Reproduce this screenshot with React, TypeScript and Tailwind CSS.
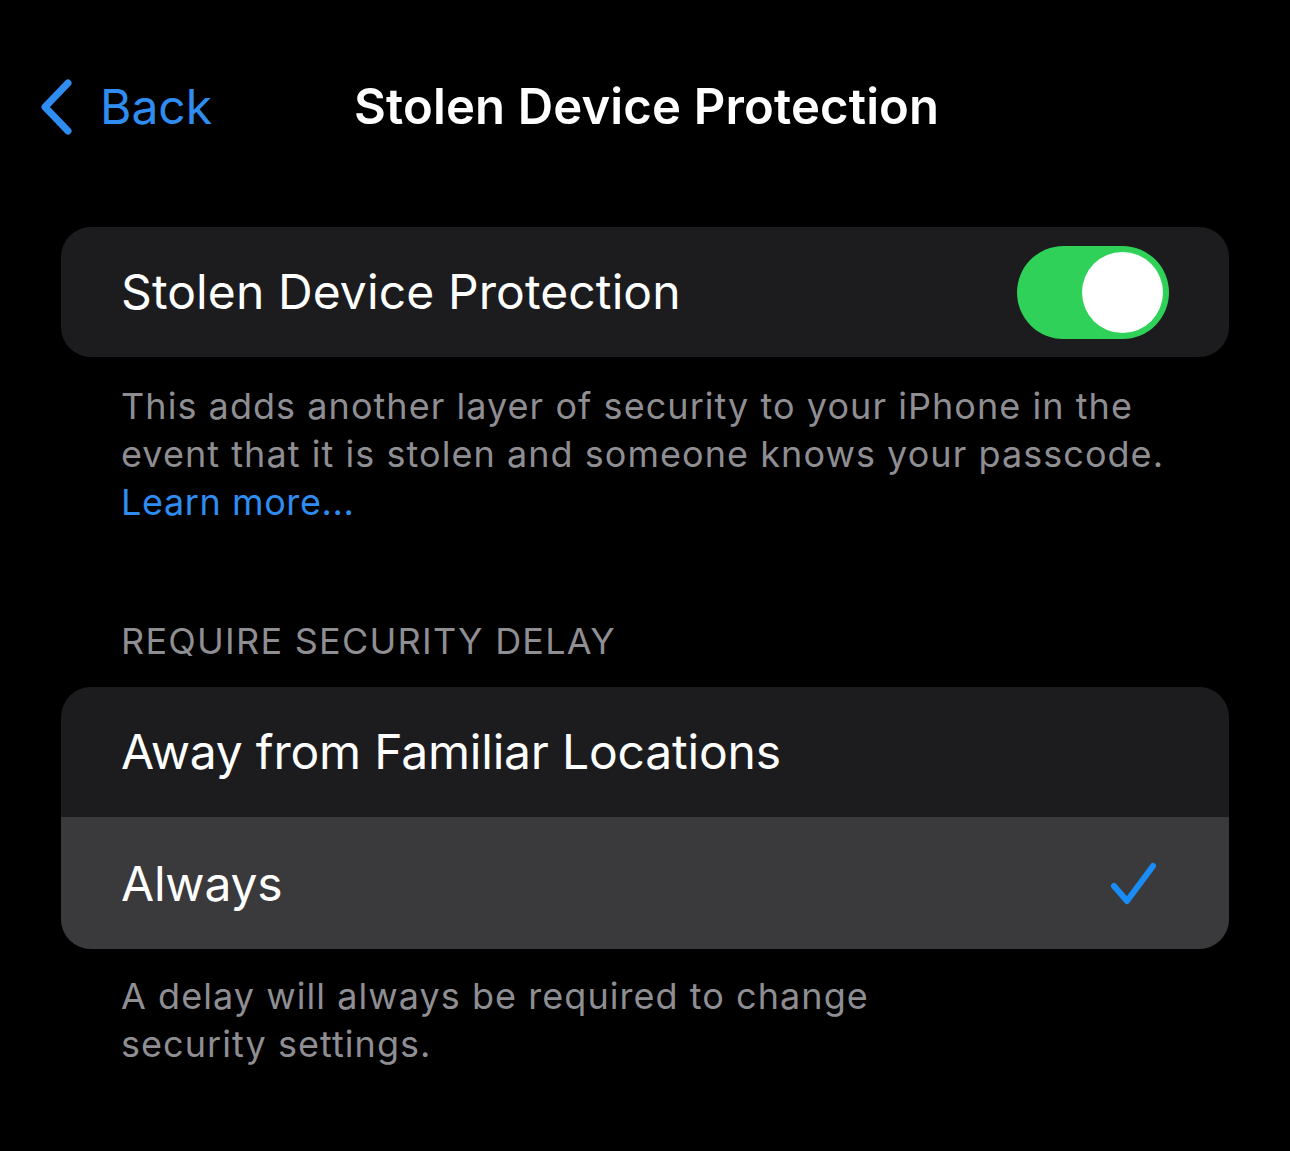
import React from "react";

export default function App() {
  return (
    <div
      className="w-[1290px] h-[1151px] bg-black text-white overflow-hidden"
      style={{ fontFamily: "Inter, 'Noto Sans', sans-serif" }}
    >
      {/* Nav bar */}
      <div className="relative h-[215px]">
        <div className="absolute left-[38px] top-[78px] flex items-center">
          <svg width="36" height="58" viewBox="0 0 36 58" className="text-[#2f8cf0]">
            <path d="M30 5 L7 29 L30 53" fill="none" stroke="currentColor" strokeWidth="7" strokeLinecap="round" strokeLinejoin="round" />
          </svg>
          <span className="ml-[26px] text-[48px] leading-none text-[#2f8cf0] tracking-[0px]">Back</span>
        </div>
        <div className="absolute left-[354px] top-[79px] text-[49px] leading-[56px] font-semibold tracking-[0.15px]">
          Stolen Device Protection
        </div>
      </div>

      {/* Card 1 */}
      <div className="mx-[61px] mt-[12px] h-[130px] rounded-[30px] bg-[#1c1c1e] flex items-center justify-between pl-[60px] pr-[60px]">
        <span className="text-[48px] tracking-[0.1px]">Stolen Device Protection</span>
        <div className="w-[152px] h-[93px] rounded-full bg-[#30d158] flex items-center justify-end pr-[6px]">
          <div className="w-[81px] h-[81px] rounded-full bg-white" />
        </div>
      </div>

      <div className="pl-[121px] pt-[25px] text-[36px] leading-[48px] text-[#8e8e93] tracking-[1.05px]">
        <div>This adds another layer of security to your iPhone in the</div>
        <div>event that it is stolen and someone knows your passcode.</div>
        <div className="text-[#2f8cf0] tracking-[0.6px]">Learn more...</div>
      </div>

      <div className="pl-[121px] mt-[91px] text-[36px] leading-[48px] text-[#8e8e93] tracking-[1.25px]">
        REQUIRE SECURITY DELAY
      </div>

      {/* Card 2 */}
      <div className="mx-[61px] mt-[22px] rounded-[30px] bg-[#1c1c1e] overflow-hidden">
        <div className="h-[130px] flex items-center pl-[60px]">
          <span className="text-[48px] tracking-[-0.2px]">Away from Familiar Locations</span>
        </div>
        <div className="h-[132px] bg-[#3a3a3c] flex items-center justify-between pl-[60px] pr-[70px]">
          <span className="text-[48px] tracking-[-0.2px] mt-[2px]">Always</span>
          <svg width="50" height="48" viewBox="0 0 50 48" className="mt-[4px]">
            <path d="M5 25 L18 40 L44 5" fill="none" stroke="#1a8cf5" strokeWidth="6" strokeLinecap="round" strokeLinejoin="round" />
          </svg>
        </div>
      </div>

      <div className="pl-[121px] pt-[23px] text-[36px] leading-[48px] text-[#8e8e93] tracking-[1.05px]">
        <div>A delay will always be required to change</div>
        <div>security settings.</div>
      </div>
    </div>
  );
}
